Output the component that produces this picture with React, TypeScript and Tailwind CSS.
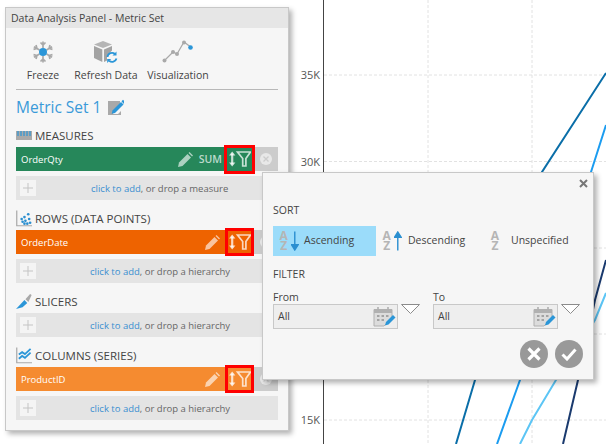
const font = "font-['Open_Sans',_'Noto_Sans',_sans-serif]"

function SnowIcon() {
  const arms = [0, 60, 120, 180, 240, 300]
  return (
    <svg width="24" height="24" viewBox="0 0 24 24">
      {arms.map(a => (
        <g key={a} transform={`rotate(${a} 12 12)`} stroke="#a9a9a9" strokeWidth="1.7" fill="none">
          <path d="M12 8V1.5M9.5 2.5 12 5l2.5-2.5" />
        </g>
      ))}
      <circle cx="12" cy="12" r="4" fill="#2b96d8" />
    </svg>
  )
}

function CubeIcon() {
  return (
    <svg width="26" height="24" viewBox="0 0 26 24">
      <path d="M1 4.5 10 1l9 3.5L10 8Z" fill="#b5b5b5" />
      <path d="M1 6v12l8.3 4V9.5Z" fill="#a3a3a3" />
      <path d="M11 9.5V22l3-1.5v-5l5-5V6Z" fill="#a3a3a3" />
      <path d="M14.5 17a4.5 4.5 0 0 1 7.5-3" stroke="#2b96d8" strokeWidth="1.8" fill="none" />
      <path d="M23.5 11.5v4h-4Z" fill="#2b96d8" />
      <path d="M23.5 18.5a4.5 4.5 0 0 1-7.3 2.2" stroke="#2b96d8" strokeWidth="1.8" fill="none" />
      <path d="M14.2 23v-4h4Z" fill="#2b96d8" />
    </svg>
  )
}

function VisIcon() {
  return (
    <svg width="32" height="24" viewBox="0 0 32 24">
      <path d="M2 21 11 12l4 2 7-12 8 6" stroke="#a9a9a9" strokeWidth="1.2" fill="none" />
      <circle cx="2.5" cy="20.5" r="2" fill="#a9a9a9" />
      <circle cx="11" cy="12" r="2" fill="#a9a9a9" />
      <circle cx="15" cy="14" r="2" fill="#a9a9a9" />
      <circle cx="22" cy="2.5" r="2" fill="#a9a9a9" />
      <circle cx="28.5" cy="7.5" r="2.3" fill="#2b96d8" />
    </svg>
  )
}

function EditSquareIcon() {
  return (
    <svg width="16" height="16" viewBox="0 0 16 16">
      <path d="M0 2h12v3l-6 6-1 4h5l3-3v4H0Z" fill="#a9a9a9" />
      <path d="M4.5 11.5 13 3l2.5 2.5L7 14l-3.3.8Z" fill="#2b96d8" />
      <path d="M13.5 2.2 15 .8l1 1v1.5L15.8 5Z" fill="#2b96d8" />
    </svg>
  )
}

function RulerIcon() {
  return (
    <svg width="16" height="9" viewBox="0 0 16 9">
      <rect width="16" height="9" fill="#a9a9a9" />
      <path d="M2 0v5M5 0v5M8 0v5M11 0v5M14 0v5" stroke="#2b96d8" strokeWidth="1.2" />
    </svg>
  )
}

function ScatterIcon() {
  const dots = [[6, 9], [9, 7], [13, 4], [7, 12], [10, 11], [14, 9], [9, 14], [12, 14], [15, 13]]
  return (
    <svg width="17" height="17" viewBox="0 0 17 17">
      <path d="M.8 0v16.2H17" stroke="#a9a9a9" strokeWidth="1.3" fill="none" />
      {dots.map(([x, y]) => <circle key={`${x}-${y}`} cx={x} cy={y} r="1.4" fill="#2b8fd0" />)}
    </svg>
  )
}

function SlicerIcon() {
  return (
    <svg width="17" height="17" viewBox="0 0 17 17">
      <path d="M0 16.5 9 7l3 3-5 4.5Z" fill="#2b96d8" />
      <path d="M10 6.2 15 .5l1.6 1-3.4 7.5Z" fill="#a9a9a9" />
    </svg>
  )
}

function SeriesIcon() {
  return (
    <svg width="17" height="17" viewBox="0 0 17 17">
      <path d="M.8 0v16.2H17" stroke="#a9a9a9" strokeWidth="1.3" fill="none" />
      <path d="M3 7.5 6.5 5l3 2L15.5 1.5M3 12l3.5-3 3 2 6-5.5" stroke="#2b96d8" strokeWidth="1.9" fill="none" />
    </svg>
  )
}

function PencilIcon() {
  return (
    <svg width="15" height="15" viewBox="0 0 15 15" fill="#ffffff" fillOpacity="0.62">
      <path d="M0 15 1 10.5 9.5 2 13 5.5 4.5 14Z" />
      <path d="M10.5 1 11.5 0 15 3.5 14 4.5Z" />
    </svg>
  )
}

function SortFilterIcon() {
  return (
    <svg width="22" height="16" viewBox="0 0 22 16" fill="none" stroke="#ffffff" strokeOpacity="0.75">
      <path d="M3.2 2.5v11" strokeWidth="2.2" />
      <path d="M0 4.5 3.2.5l3.2 4ZM0 11.5l3.2 4 3.2-4Z" fill="#ffffff" fillOpacity="0.75" stroke="none" />
      <path d="M8.5 1h13L16.9 7.5V15h-3.2V7.5Z" strokeWidth="1.7" />
    </svg>
  )
}

function AzIcon({ dir }: { dir?: "up" | "down" }) {
  return (
    <div className="flex w-[20px] h-[20px] items-center">
      <div className="w-[10px] text-center text-[12px] leading-[10px] font-bold text-[#b5b5b5] whitespace-pre-line">{"A\nZ"}</div>
      {dir && (
        <svg className="ml-[3px]" width="8" height="20" viewBox="0 0 8 20">
          {dir === "down"
            ? <path d="M4 0v15M.5 14 4 19.5 7.5 14Z" stroke="#2b8fd0" strokeWidth="1.5" fill="#2b8fd0" />
            : <path d="M4 20V5M.5 6 4 .5 7.5 6Z" stroke="#2b8fd0" strokeWidth="1.5" fill="#2b8fd0" />}
        </svg>
      )}
    </div>
  )
}

function CalendarIcon() {
  return (
    <svg width="23" height="21" viewBox="0 0 23 21">
      <path d="M1 3.5h18V12l-8 8H1Z" fill="#dcdcdc" stroke="#b0b0b0" />
      <rect x="1" y="3" width="18" height="4" fill="#b0b0b0" />
      <path d="M5 1v4M15 1v4" stroke="#b0b0b0" strokeWidth="1.6" />
      <path d="M4 10h2.5M8.5 10H11M13 10h2.5M4 14h2.5M8.5 14H11" stroke="#a3a3a3" strokeWidth="2" />
      <path d="M12 19.5l1-3.5 7-7 2.5 2.5-7 7Z" fill="#2b96d8" />
    </svg>
  )
}

function Tool({ icon, label, width }: { icon: React.ReactNode; label: string; width: string }) {
  return (
    <div className={`flex flex-col items-center ${width}`}>
      <div className="h-[24px] flex items-center justify-center">{icon}</div>
      <span className="mt-[4px] text-[10.5px] leading-[14px] text-[#444] whitespace-nowrap">{label}</span>
    </div>
  )
}

function Header({ icon, label, height }: { icon: React.ReactNode; label: string; height: string }) {
  return (
    <div className={`flex items-end gap-[3px] pb-[3px] ${height}`}>
      <div className="w-[16px] h-[17px] flex items-center">{icon}</div>
      <span className="text-[11.5px] leading-[16px] text-[#444] whitespace-nowrap">{label}</span>
    </div>
  )
}

function FieldRow({ name, color, sum }: { name: string; color: string; sum?: boolean }) {
  return (
    <div className="flex h-[24px] items-center bg-[#cccccc]">
      <div className={`flex-1 h-full flex items-center pl-[5px] ${color}`}>
        <span className="flex-1 pt-[2px] text-[9.5px] text-white">{name}</span>
        <PencilIcon />
        {sum && <span className="ml-[6px] pt-[1px] text-[10.5px] font-semibold text-white/70">SUM</span>}
        {sum ? (
          <div className={`-my-[2px] -mr-[1px] ml-[2px] w-[31px] h-[29px] border-[3px] border-[#ff0000] flex items-center justify-center ${color}`}>
            <SortFilterIcon />
          </div>
        ) : (
          <div className={`-my-[2px] ml-[5px] w-[29px] h-[28px] border-[3px] border-[#ff0000] flex items-center justify-center ${color}`}>
            <SortFilterIcon />
          </div>
        )}
      </div>
      <div className="w-[24px] flex justify-center">
        <div className="w-[12px] h-[12px] rounded-full bg-[#e8e8e8] flex items-center justify-center">
          <svg width="6" height="6" viewBox="0 0 6 6"><path d="M.5.5l5 5M5.5.5l-5 5" stroke="#cccccc" strokeWidth="1.3" /></svg>
        </div>
      </div>
    </div>
  )
}

function AddRow({ what, top, gap }: { what: string; top?: boolean; gap: string }) {
  return (
    <div className={`flex h-[24px] items-center bg-[#e4e4e4] pl-[4px] ${top ? "mt-[5px]" : ""}`}>
      <div className="w-[16px] h-[16px] bg-[#f4f4f4] flex items-center justify-center">
        <svg width="10" height="10" viewBox="0 0 10 10"><path d="M5 0v10M0 5h10" stroke="#c4c4c4" /></svg>
      </div>
      <span className={`${gap} pt-[2px] text-[9.5px] text-[#666] whitespace-nowrap`}>
        <span className="text-[#3a8fd0]">click to add</span>, or drop a {what}
      </span>
    </div>
  )
}

function SortOption({ label, dir, active, box }: { label: string; dir?: "up" | "down"; active?: boolean; box: string }) {
  return (
    <div className={`flex h-[30px] items-center ${box} ${active ? "bg-[#9bdcfa]" : ""}`}>
      <AzIcon dir={dir} />
      <span className="text-[10.5px] text-[#444]">{label}</span>
    </div>
  )
}

function DateField({ label }: { label: string }) {
  return (
    <div>
      <div className="text-[10.5px] leading-[14px] text-[#444]">{label}</div>
      <div className="flex items-start">
        <div className="w-[125px] h-[25px] bg-[#eeeeee] border border-[#c8c8c8] flex items-center justify-between pl-[4px] pr-[1px]">
          <span className="text-[10.5px] text-[#444]">All</span>
          <CalendarIcon />
        </div>
        <svg className="ml-[3px]" width="19" height="10" viewBox="0 0 19 10">
          <path d="M.5.5h18L9.5 9.5Z" fill="#ffffff" stroke="#8c8c8c" />
        </svg>
      </div>
    </div>
  )
}

function Chart() {
  const rows = [75, 161.5, 248, 334, 420]
  const labels = ["35K", "30K", "", "", "15K"]
  return (
    <svg className="absolute inset-0" width="606" height="444" viewBox="0 0 606 444">
      {rows.map(y => <path key={y} d={`M324 ${y}H606`} stroke="#e2e2e2" strokeDasharray="3 2" />)}
      <path d="M428 0V444M532 0V444" stroke="#e2e2e2" strokeDasharray="3 2" />
      <path d="M323.5 0V444" stroke="#444444" />
      {labels.map((t, i) => t && (
        <text key={t} x="320" y={rows[i] + 4} textAnchor="end" fontSize="11" fontFamily="Open Sans" fill="#555555">{t}</text>
      ))}
      <g fill="none" strokeWidth="2">
        <path d="M606 73 542 172 475 380 456 444" stroke="#0a6ea8" />
        <path d="M606 125 591 172 520 380 497 444" stroke="#1b9cf0" />
        <path d="M606 293 595 320 556 380 532 420 520 444" stroke="#5cc5f5" />
        <path d="M606 260 595 300 578 380 563 444" stroke="#1a3a6e" />
      </g>
    </svg>
  )
}

export default function App() {
  return (
    <div className={`relative w-[606px] h-[444px] overflow-hidden bg-white pt-[7px] pl-[5px] ${font}`}>
      <Chart />

      {/* Data panel */}
      <div className="relative w-[284px] h-[424px] bg-[#f6f6f6] border border-[#c8c8c8] shadow-[3px_3px_5px_rgba(0,0,0,0.3)]">
        <div className="h-[20px] bg-[#e6e6e6] pl-[5px] text-[10.5px] leading-[20px] text-[#444]">Data Analysis Panel - Metric Set</div>
        <div className="flex pl-[7px] pt-[12px]">
          <Tool icon={<SnowIcon />} label="Freeze" width="w-[60px]" />
          <Tool icon={<CubeIcon />} label="Refresh Data" width="w-[66px]" />
          <Tool icon={<VisIcon />} label="Visualization" width="w-[78px]" />
        </div>
        <div className="mx-[10px] mt-[7px]">
          <div className="h-px bg-[#b8b8b8]" />
          <div className="h-[34px] flex items-center gap-[6px]">
            <span className="pt-[2px] text-[15.5px] text-[#3a9ad9]">Metric Set 1</span>
            <EditSquareIcon />
          </div>
          <Header icon={<RulerIcon />} label="MEASURES" height="h-[23px]" />
          <FieldRow name="OrderQty" color="bg-[#26875a]" sum />
          <AddRow what="measure" top gap="ml-[55px]" />
          <Header icon={<ScatterIcon />} label="ROWS (DATA POINTS)" height="h-[30px]" />
          <FieldRow name="OrderDate" color="bg-[#ee6300]" />
          <AddRow what="hierarchy" top gap="ml-[54px]" />
          <Header icon={<SlicerIcon />} label="SLICERS" height="h-[30px]" />
          <AddRow what="hierarchy" gap="ml-[54px]" />
          <Header icon={<SeriesIcon />} label="COLUMNS (SERIES)" height="h-[30px]" />
          <FieldRow name="ProductID" color="bg-[#f58b30]" />
          <AddRow what="hierarchy" top gap="ml-[54px]" />
        </div>
      </div>

      {/* Sort and filter popup */}
      <div className="absolute left-[262px] top-[172px] w-[332px] h-[208px] bg-[#f6f6f6] border border-[#c8c8c8] shadow-[3px_3px_5px_rgba(0,0,0,0.3)] pl-[10px]">
        <svg className="absolute right-[5px] top-[6px]" width="9" height="9" viewBox="0 0 9 9">
          <path d="M1 1l7 7M8 1 1 8" stroke="#777777" strokeWidth="2" />
        </svg>
        <div className="pt-[29px] text-[10.5px] leading-[16px] text-[#444]">SORT</div>
        <div className="flex mt-[8px]">
          <SortOption label="Ascending" dir="down" active box="w-[103px] pl-[6px] gap-[5px]" />
          <SortOption label="Descending" dir="up" box="w-[103px] pl-[6px] gap-[6px]" />
          <SortOption label="Unspecified" box="w-[100px] pl-[11px] gap-[1px]" />
        </div>
        <div className="mt-[10px] text-[10.5px] leading-[16px] text-[#444]">FILTER</div>
        <div className="flex gap-[13px] mt-[8px]">
          <DateField label="From" />
          <DateField label="To" />
        </div>
        <div className="flex justify-end gap-[7px] mt-[11px] pr-[10px]">
          <div className="w-[28px] h-[28px] rounded-full bg-[#999999] flex items-center justify-center">
            <svg width="16" height="16" viewBox="0 0 16 16"><path d="M2.5 2.5l11 11M13.5 2.5l-11 11" stroke="#ffffff" strokeWidth="3.2" /></svg>
          </div>
          <div className="w-[28px] h-[28px] rounded-full bg-[#999999] flex items-center justify-center">
            <svg width="16" height="13" viewBox="0 0 16 13"><path d="M1.5 6.5 6 11l8.5-9.5" stroke="#ffffff" strokeWidth="3" fill="none" /></svg>
          </div>
        </div>
      </div>
    </div>
  )
}
